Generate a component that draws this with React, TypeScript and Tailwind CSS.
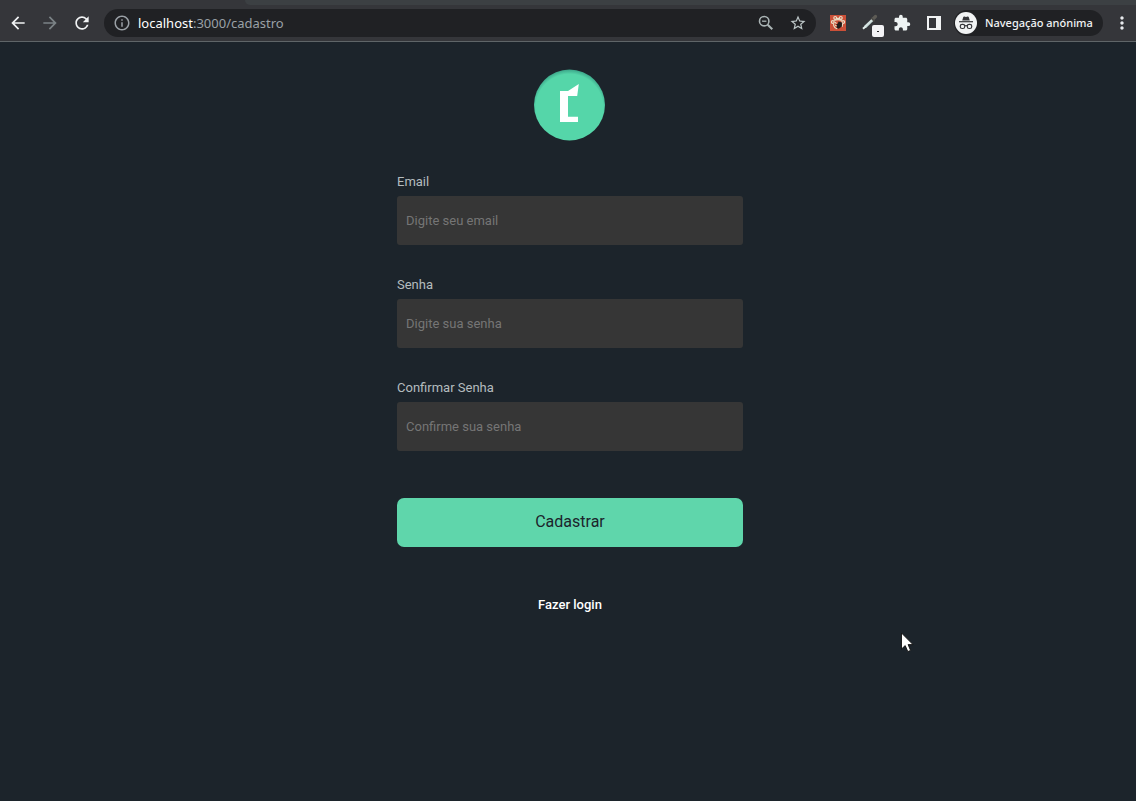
import type { ReactNode } from "react";
import {
  MdArrowBack,
  MdArrowForward,
  MdExtension,
  MdInfoOutline,
  MdMoreVert,
  MdRefresh,
  MdStarBorder,
} from "react-icons/md";

function IconButton({ label, children }: { label: string; children: ReactNode }) {
  return (
    <button type="button" aria-label={label} className="flex size-8 shrink-0 items-center justify-center">
      {children}
    </button>
  );
}

function ZoomOutIcon() {
  return (
    <svg width="18" height="18" viewBox="0 0 18 18" fill="none" stroke="#aab4b5" aria-hidden="true">
      <circle cx="7.2" cy="7.2" r="4.7" strokeWidth="1.6" />
      <path d="M10.7 10.7L15.3 15.3" strokeWidth="2" />
      <path d="M5 7.2h4.4" strokeWidth="1.3" />
    </svg>
  );
}

function PawIcon() {
  return (
    <svg width="16" height="16" viewBox="0 0 16 16" aria-hidden="true">
      <rect width="16" height="16" fill="#cb5038" />
      <g fill="none" stroke="#eadfc6" strokeWidth="1.2">
        <circle cx="5.2" cy="2.9" r="1.4" />
        <circle cx="10.8" cy="2.9" r="1.4" />
        <path d="M6.6 3.4h2.8" />
        <circle cx="2.8" cy="7" r="1.4" />
        <circle cx="13.2" cy="7" r="1.4" />
        <path d="M4.2 5.4Q8 3.8 11.8 5.4M3.6 8.6Q3.4 11 4.8 12.4L7.2 13.8M12.6 9L12 12" />
      </g>
      <path d="M8.4 6.6L12 7.6 11.8 11.4 8.8 13.8 6.4 12.8 7.2 10.6 6 9.4 8 8.6z" fill="#211d1b" />
      <path d="M4.8 7.2l1.8 1.2M5.2 10l1.2 1" stroke="#eadfc6" strokeWidth="1.2" />
    </svg>
  );
}

function DropperIcon() {
  return (
    <svg width="24" height="24" viewBox="0 0 24 24" aria-hidden="true">
      <path d="M14.5 8.5L17.5 5.5" stroke="#5d5b55" strokeWidth="3.2" strokeLinecap="round" />
      <path d="M13.2 7L16.6 10.4" stroke="#4b4a46" strokeWidth="1.6" />
      <path d="M14.2 9.2L7 16" stroke="#d5e4e2" strokeWidth="2.8" />
      <path d="M14.6 10.4L8.4 16.4" stroke="#8ba09f" strokeWidth=".8" />
      <path d="M7.6 15.4L5 17.8" stroke="#e4efec" strokeWidth="2" />
    </svg>
  );
}

function IncognitoIcon() {
  return (
    <svg width="22" height="22" viewBox="0 0 22 22" className="shrink-0" aria-hidden="true">
      <circle cx="11" cy="11" r="11" fill="#f1f3f4" />
      <path d="M7.2 8.4L8.3 5Q8.6 4.3 9.4 4.6L11 5.1 12.6 4.6Q13.4 4.3 13.7 5L14.8 8.4z" fill="#35363a" />
      <path d="M4 9.7h14" stroke="#35363a" strokeWidth="1.2" />
      <g fill="none" stroke="#35363a" strokeWidth="1.2">
        <rect x="5.3" y="12.3" width="4.4" height="4.2" rx="1.8" />
        <rect x="12.3" y="12.3" width="4.4" height="4.2" rx="1.8" />
        <path d="M9.7 13.9Q11 13.1 12.3 13.9" />
      </g>
    </svg>
  );
}

function BrowserBar() {
  return (
    <header className="border-b border-[#5f6568] bg-[#35363a]">
      <div className="flex h-[5px] bg-[#35363a]">
        <div className="w-[245px] shrink-0" />
        <div className="flex-1 rounded-bl-md bg-[#3c4043]" />
      </div>
      <div className="flex h-9 items-center pl-[2px]">
        <nav aria-label="Navegação" className="flex shrink-0">
          <IconButton label="Voltar">
            <MdArrowBack className="size-5 text-[#f1f3f4]" />
          </IconButton>
          <IconButton label="Avançar">
            <MdArrowForward className="size-5 text-[#7b8386]" />
          </IconButton>
          <IconButton label="Atualizar">
            <MdRefresh className="size-5 text-[#f1f3f4]" />
          </IconButton>
        </nav>
        <div className="ml-[6px] flex h-7 min-w-0 flex-1 items-center rounded-full bg-[#202124] pr-[2px] pl-[9px]">
          <MdInfoOutline className="size-[18px] shrink-0 text-[#9aa0a6]" />
          <div
            role="textbox"
            aria-label="Endereço"
            tabIndex={0}
            className="ml-[7px] min-w-0 flex-1 truncate font-['Noto_Sans',sans-serif] text-[13px] leading-5 text-[#9aa0a6]"
          >
            <span className="text-white">localhost</span>:3000/cadastro
          </div>
          <IconButton label="Zoom">
            <ZoomOutIcon />
          </IconButton>
          <IconButton label="Favoritos">
            <MdStarBorder className="size-[18px] text-[#bdc7c8]" />
          </IconButton>
        </div>
        <div className="ml-[6px] flex shrink-0">
          <IconButton label="Extensão">
            <PawIcon />
          </IconButton>
          <div className="relative">
            <IconButton label="Conta-gotas">
              <DropperIcon />
            </IconButton>
            <span className="absolute top-[18px] left-[18px] flex size-3 items-center justify-center rounded-[2px] bg-[#f3f3f6] text-[#202124]">
              <span className="h-[1px] w-[2px] bg-current" />
            </span>
          </div>
          <IconButton label="Extensões">
            <MdExtension className="size-[18px] text-[#eef3f3]" />
          </IconButton>
          <IconButton label="Painel lateral">
            <svg width="14" height="14" viewBox="0 0 14 14" aria-hidden="true">
              <path fillRule="evenodd" d="M0 0h14v14H0zM2 2v10h7V2z" fill="#f1f3f4" />
            </svg>
          </IconButton>
        </div>
        <button
          type="button"
          className="ml-1 flex h-[26px] w-[149px] shrink-0 items-center gap-2 rounded-full bg-[#202124] pl-[1px] font-['Noto_Sans',sans-serif] text-[11px] leading-4 font-medium text-[#f1f3f4]"
        >
          <IncognitoIcon />
          Navegação anónima
        </button>
        <button type="button" aria-label="Menu" className="mr-1 ml-[9px] flex size-5 shrink-0 items-center justify-center">
          <MdMoreVert className="size-5 text-[#e8eaed]" />
        </button>
      </div>
    </header>
  );
}

function Logo() {
  return (
    <svg width="72" height="72" viewBox="0 0 72 72" role="img" aria-label="Logo">
      <defs>
        <radialGradient id="logoShade" cx="50%" cy="54%" r="54%">
          <stop offset="88%" stopColor="#55d6a9" />
          <stop offset="100%" stopColor="#3ba488" />
        </radialGradient>
      </defs>
      <circle cx="35.5" cy="36" r="35.5" fill="url(#logoShade)" />
      <path d="M26 22H34L44.8 15 43.2 27H34V47.8H44V53H26z" fill="#fff" />
    </svg>
  );
}

function Field({ id, label, type, placeholder }: { id: string; label: string; type: string; placeholder: string }) {
  return (
    <div className="flex flex-col gap-[6px]">
      <label htmlFor={id} className="text-[13px] leading-4 text-[#b4bcbf]">
        {label}
      </label>
      <input
        id={id}
        type={type}
        placeholder={placeholder}
        className="h-[49px] w-full rounded-[3px] bg-[#363636] px-[9px] text-[13px] text-white outline-none placeholder:text-[#757575]"
      />
    </div>
  );
}

export default function App() {
  return (
    <div className="relative flex min-h-screen flex-col bg-[#1c242b] font-['Roboto',sans-serif]">
      <BrowserBar />
      <main className="flex flex-1 flex-col items-center pt-[27px] pl-1">
        <Logo />
        <form className="mt-[33px] flex w-full max-w-[346px] flex-col" onSubmit={(event) => event.preventDefault()}>
          <div className="flex flex-col gap-8">
            <Field id="email" label="Email" type="email" placeholder="Digite seu email" />
            <Field id="senha" label="Senha" type="password" placeholder="Digite sua senha" />
            <Field id="confirmar" label="Confirmar Senha" type="password" placeholder="Confirme sua senha" />
          </div>
          <button type="submit" className="mt-[47px] h-[49px] rounded-[7px] bg-[#5fd6ab] pb-[2px] text-base text-[#1c242b]">
            Cadastrar
          </button>
        </form>
        <a href="#login" className="mt-[50px] text-[13px] leading-4 font-medium text-white">
          Fazer login
        </a>
      </main>
      <svg className="pointer-events-none absolute top-[632px] left-[901px]" width="13" height="21" viewBox="0 0 13 21" aria-hidden="true">
        <path d="M.5 1V17L4.2 13.6 6.8 19.6 9.6 18.4 7.1 12.6H12z" fill="#fff" stroke="#111" strokeWidth=".9" />
      </svg>
    </div>
  );
}
